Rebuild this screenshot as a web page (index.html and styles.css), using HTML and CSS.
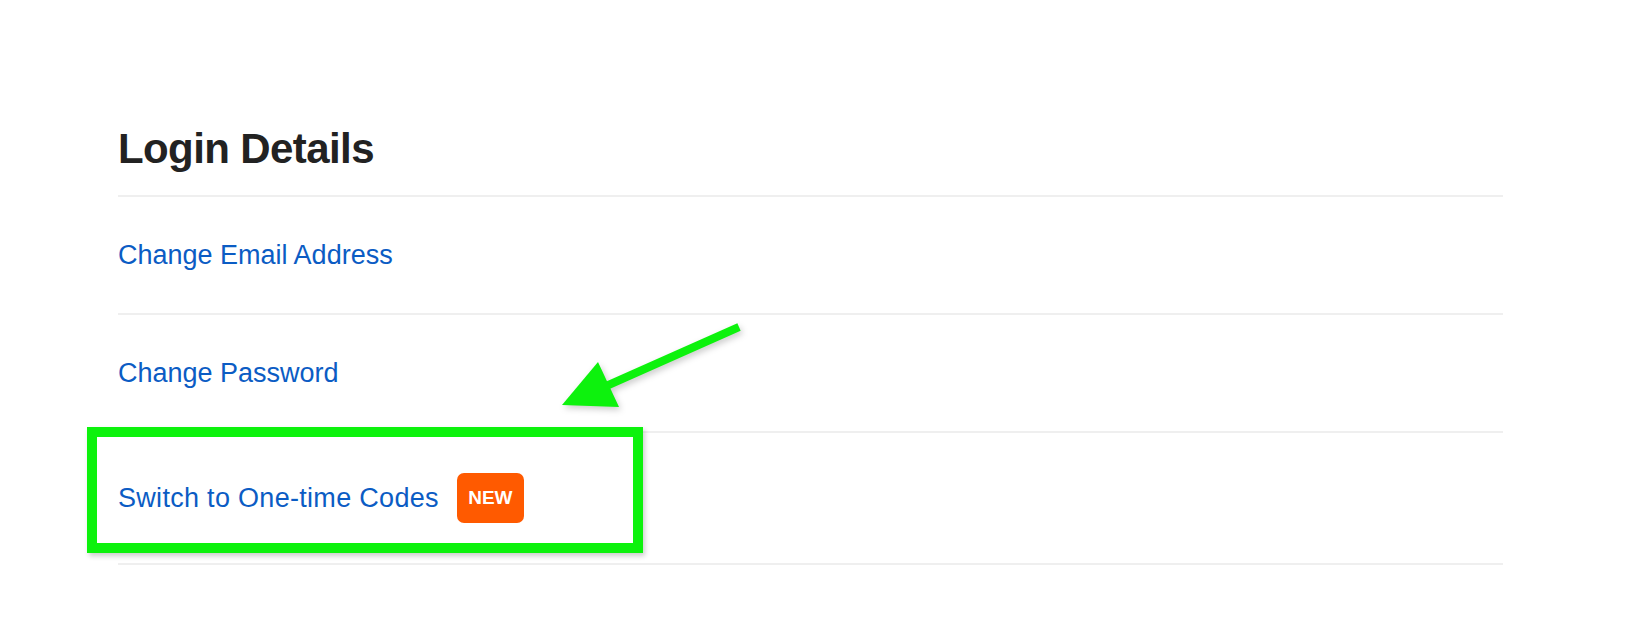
FILE: index.html
```html
<!DOCTYPE html>
<html>
<head>
  <title>Login Details</title>
  <link rel="stylesheet" href="styles.css">
</head>
<body>
  <div class="page">
    <h1 class="title">Login Details</h1>
    <ul class="settings">
      <li class="row"><a href="#">Change Email Address</a></li>
      <li class="row"><a href="#">Change Password</a></li>
      <li class="row"><a href="#" class="wide">Switch to One-time Codes</a><span class="badge">NEW</span></li>
    </ul>

    <!-- annotation drawn over the screenshot -->
    <div class="highlight"></div>
    <svg class="arrow" width="230" height="130" viewBox="0 0 230 130">
      <line x1="199" y1="27" x2="64" y2="87" stroke="#0df20d" stroke-width="8"/>
      <polygon points="22,105 58,62 79,107" fill="#0df20d"/>
    </svg>
  </div>
</body>
</html>
```

FILE: styles.css
```css
body {
  margin: 0;
  background: #fff;
  font-family: "Liberation Sans", Arial, sans-serif;
}

.page {
  position: relative;
  padding: 124px 0 0 118px;
  width: 1385px;
}

.title {
  margin: 0 0 21px;
  font-size: 42px;
  line-height: 50px;
  letter-spacing: -0.6px;
  font-weight: bold;
  color: #222;
}

.settings {
  list-style: none;
  margin: 0;
  padding: 0;
  border-bottom: 2px solid #efefef;
}

.row {
  display: flex;
  align-items: center;
  gap: 18px;
  padding: 40px 0;
  border-top: 2px solid #efefef;
}

.row a {
  font-size: 27px;
  line-height: 36px;
  color: #0b5cc4;
  text-decoration: none;
}

.row a.wide {
  letter-spacing: 0.3px;
}

.badge {
  display: inline-flex;
  align-items: center;
  justify-content: center;
  width: 67px;
  height: 50px;
  border-radius: 7px;
  background: #ff5a00;
  color: #fff;
  font-size: 19px;
  font-weight: bold;
}

.highlight {
  position: absolute;
  left: 87px;
  top: 427px;
  width: 536px;
  height: 106px;
  border: 10px solid #0df20d;
  box-shadow: 2px 3px 5px rgba(0, 0, 0, 0.2);
}

.arrow {
  position: absolute;
  left: 540px;
  top: 300px;
  filter: drop-shadow(2px 3px 3px rgba(0, 0, 0, 0.2));
}
```
